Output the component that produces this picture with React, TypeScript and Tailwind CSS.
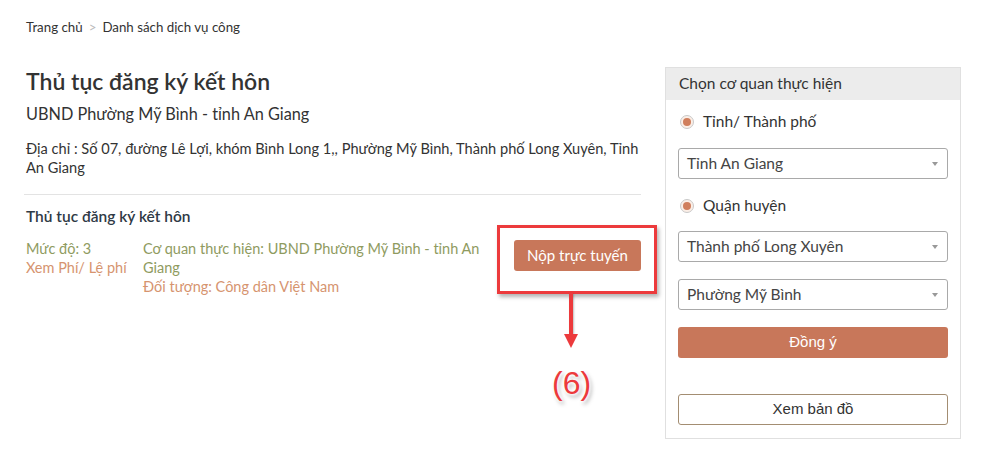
import React from 'react';

const font = { fontFamily: 'Lato, "Open Sans", sans-serif' };

function Radio({ label }: { label: string }) {
  return (
    <div className="flex items-center gap-[9px] h-5 pl-[2px]">
      <span className="w-[14px] h-[14px] rounded-full border border-[#c9c9c9] bg-[#fbeee6] flex items-center justify-center">
        <span className="w-[8px] h-[8px] rounded-full bg-[#d07e5c]" />
      </span>
      <span className="text-[15.5px] text-[#333]">{label}</span>
    </div>
  );
}

function Select({ value }: { value: string }) {
  return (
    <div className="h-[31px] border border-[#a9a9a9] rounded-[3px] flex items-center justify-between pl-[8px] pr-[9px]">
      <span className="text-[15.5px] text-[#444]">{value}</span>
      <span className="w-0 h-0 border-l-[3px] border-r-[3px] border-t-[4px] border-l-transparent border-r-transparent border-t-[#999]" />
    </div>
  );
}

export default function App() {
  return (
    <div className="relative w-[994px] h-[453px] bg-white overflow-hidden px-[26px] pt-[18px]" style={font}>
      {/* breadcrumb */}
      <div className="flex items-center gap-[6px] text-[13.3px] leading-[18px] text-[#333]">
        <span>Trang chủ</span>
        <span className="text-[#bbb]">&gt;</span>
        <span>Danh sách dịch vụ công</span>
      </div>

      <div className="flex mt-[31px] gap-[24px]">
        {/* left */}
        <div className="w-[615px] flex flex-col">
          <h1 className="text-[23px] leading-[28px] font-semibold text-[#333]">Thủ tục đăng ký kết hôn</h1>
          <div className="mt-[8px] text-[16.3px] leading-[22px] text-[#333]">UBND Phường Mỹ Bình - tỉnh An Giang</div>
          <div className="mt-[14px] text-[14.6px] leading-[19px] text-[#333] pr-[2px]">
            Địa chỉ : Số 07, đường Lê Lợi, khóm Bình Long 1,, Phường Mỹ Bình, Thành phố Long Xuyên, Tỉnh An Giang
          </div>
          <div className="mt-[17px] h-px bg-[#e3e3e3] -ml-[2px]" />
          <div className="mt-[11px] text-[15.5px] leading-[20px] font-semibold text-[#2f3a46]">Thủ tục đăng ký kết hôn</div>
          <div className="mt-[13px] flex text-[14.5px] leading-[19px]">
            <div className="w-[117px] flex flex-col">
              <span className="text-[#8f9b5f]">Mức độ: 3</span>
              <span className="text-[#d6946f]">Xem Phí/ Lệ phí</span>
            </div>
            <div className="w-[345px] flex flex-col">
              <span className="text-[#8f9b5f]">Cơ quan thực hiện: UBND Phường Mỹ Bình - tỉnh An Giang</span>
              <span className="text-[#d6946f]">Đối tượng: Công dân Việt Nam</span>
            </div>
            <div className="flex-1 flex justify-end pt-[1px]">
              <button className="w-[127px] h-[31px] rounded-[3px] bg-[#c8775a] text-white text-[15px]">Nộp trực tuyến</button>
            </div>
          </div>
        </div>

        {/* right panel */}
        <div className="w-[296px] h-[372px] border border-[#e0e0e0] flex flex-col">
          <div className="h-[32px] bg-[#ececec] flex items-center px-[13px] text-[15.5px] text-[#333]">Chọn cơ quan thực hiện</div>
          <div className="flex flex-col px-[12px] pt-[12px]">
            <Radio label="Tỉnh/ Thành phố" />
            <div className="mt-[16px]"><Select value="Tỉnh An Giang" /></div>
            <div className="mt-[17px]"><Radio label="Quận huyện" /></div>
            <div className="mt-[15px]"><Select value="Thành phố Long Xuyên" /></div>
            <div className="mt-[17px]"><Select value="Phường Mỹ Bình" /></div>
            <button className="mt-[17px] h-[31px] rounded-[3px] bg-[#c8775a] text-white text-[15px]" style={{ fontFamily: '"Liberation Sans", Arial, sans-serif' }}>Đồng ý</button>
            <button className="mt-[36px] h-[31px] rounded-[3px] border border-[#a38d72] bg-white text-[#333] text-[15px]" style={{ fontFamily: '"Liberation Sans", Arial, sans-serif' }}>Xem bản đồ</button>
          </div>
        </div>
      </div>

      {/* annotation */}
      <div className="absolute left-[497px] top-[225px] w-[160px] h-[69px] border-[3px] border-[#ec3a3c] shadow-[2px_3px_4px_rgba(0,0,0,0.3)]" />
      <div className="absolute left-[569px] top-[293px] w-[4px] h-[43px] bg-[#ec3a3c] shadow-[1px_1px_2px_rgba(0,0,0,0.25)]" />
      <div className="absolute left-[564px] top-[334px] w-0 h-0 border-l-[7px] border-r-[7px] border-t-[14px] border-l-transparent border-r-transparent border-t-[#ec3a3c]" />
      <div
        className="absolute left-[552px] top-[362px] text-[32px] leading-[42px] text-[#ec3a3c]"
        style={{
          fontFamily: '"Liberation Sans", Arial, sans-serif',
          textShadow: '0 0 3px #fff, 0 0 3px #fff, 0 0 4px #fff, 2px 3px 4px rgba(0,0,0,0.35)',
        }}
      >
        (6)
      </div>
    </div>
  );
}
